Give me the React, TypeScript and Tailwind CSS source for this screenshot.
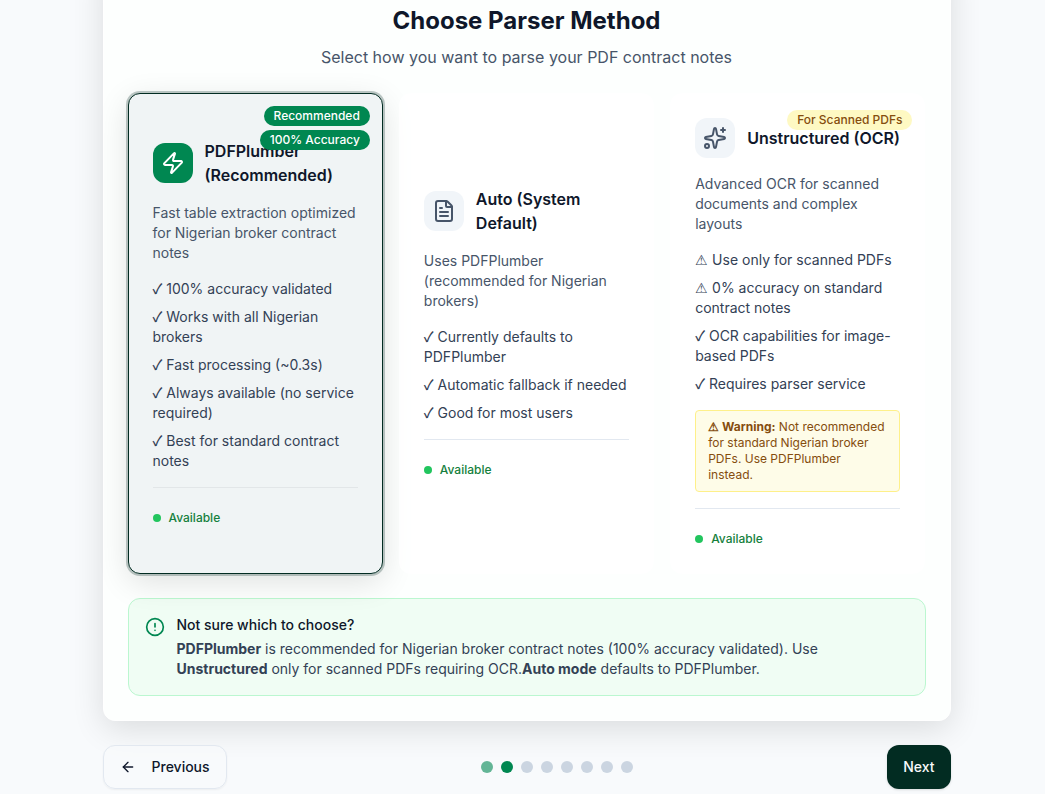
import clsx from "clsx";
import { ArrowLeft, CircleAlert, FileText, Sparkles, Zap } from "lucide-react";
import type { LucideIcon } from "lucide-react";
import React, { useState } from "react";

type ParserId = "pdfplumber" | "auto" | "unstructured";

interface Feature {
  mark: "✓" | "⚠";
  text: string;
}

interface ParserMethod {
  id: ParserId;
  name: string;
  description: string;
  icon: LucideIcon;
  features: Feature[];
  warning?: string;
}

const methods: ParserMethod[] = [
  {
    id: "pdfplumber",
    name: "PDFPlumber (Recommended)",
    description:
      "Fast table extraction optimized for Nigerian broker contract notes",
    icon: Zap,
    features: [
      { mark: "✓", text: "100% accuracy validated" },
      { mark: "✓", text: "Works with all Nigerian brokers" },
      { mark: "✓", text: "Fast processing (~0.3s)" },
      { mark: "✓", text: "Always available (no service required)" },
      { mark: "✓", text: "Best for standard contract notes" },
    ],
  },
  {
    id: "auto",
    name: "Auto (System Default)",
    description: "Uses PDFPlumber (recommended for Nigerian brokers)",
    icon: FileText,
    features: [
      { mark: "✓", text: "Currently defaults to PDFPlumber" },
      { mark: "✓", text: "Automatic fallback if needed" },
      { mark: "✓", text: "Good for most users" },
    ],
  },
  {
    id: "unstructured",
    name: "Unstructured (OCR)",
    description: "Advanced OCR for scanned documents and complex layouts",
    icon: Sparkles,
    features: [
      { mark: "⚠", text: "Use only for scanned PDFs" },
      { mark: "⚠", text: "0% accuracy on standard contract notes" },
      { mark: "✓", text: "OCR capabilities for image-based PDFs" },
      { mark: "✓", text: "Requires parser service" },
    ],
    warning:
      "Not recommended for standard Nigerian broker PDFs. Use PDFPlumber instead.",
  },
];

const STEP_COUNT = 8;
const CURRENT_STEP = 1;

export default function App() {
  const [selected, setSelected] = useState<ParserId>("pdfplumber");

  return (
    <main className="min-h-screen overflow-hidden bg-[#f8fafc] pl-2 font-['Inter',sans-serif] text-slate-900">
      <div className="mx-auto max-w-4xl px-6">
        <section className="-mt-10 rounded-xl border border-white bg-[#fdfffe] px-6 pt-11 pb-6 shadow-[0_8px_32px_rgba(0,0,0,0.12)]">
          <header className="mb-6 text-center">
            <h2 className="mb-2 text-2xl font-bold text-[#0f172a]">
              Choose Parser Method
            </h2>
            <p className="text-[#475569]">
              Select how you want to parse your PDF contract notes
            </p>
          </header>

          <div className="grid grid-cols-3 gap-4">
            {methods.map((method) => (
              <MethodCard
                key={method.id}
                method={method}
                selected={method.id === selected}
                onSelect={() => setSelected(method.id)}
              />
            ))}
          </div>

          <HelpNote />
        </section>

        <StepNavigation />
      </div>
    </main>
  );
}

interface MethodCardProps {
  method: ParserMethod;
  selected: boolean;
  onSelect: () => void;
}

function MethodCard({ method, selected, onSelect }: MethodCardProps) {
  const Icon = method.icon;

  return (
    <button
      type="button"
      aria-pressed={selected}
      onClick={onSelect}
      className={clsx(
        "relative flex flex-col justify-center rounded-xl border p-6 text-left",
        selected
          ? "border-[#022c22] bg-[#f0f4f5] shadow-[0_8px_32px_rgba(0,0,0,0.12)] ring-2 ring-[#022c22]/25"
          : "border-transparent bg-white/70",
      )}
    >
      <div className="mb-4 flex items-center gap-3">
        <span
          className={clsx(
            "flex size-10 shrink-0 items-center justify-center rounded-xl",
            selected ? "bg-[#008751] text-white" : "bg-[#f1f5f9] text-[#475569]",
          )}
        >
          <Icon className="size-6" />
        </span>
        <h3 className="font-semibold text-[#0f172a]">{method.name}</h3>
      </div>

      <p className="mb-4 text-sm text-[#475569]">{method.description}</p>

      <ul className="space-y-2 text-sm text-[#334155]">
        {method.features.map((feature) => (
          <li key={feature.text}>
            <Mark>{feature.mark}</Mark> {feature.text}
          </li>
        ))}
      </ul>

      {method.warning && (
        <p className="mt-4 rounded-sm border border-[#fef08a] bg-[#fefce8] px-3 py-2 text-xs text-[#854d0e]">
          <strong className="font-bold">
            <Mark>⚠</Mark> Warning:
          </strong>{" "}
          {method.warning}
        </p>
      )}

      <div
        className={clsx(
          "mt-4 flex w-full items-center gap-2 border-t pt-5 text-xs/5 font-medium text-[#15803d]",
          selected ? "border-[#e2e6e8]" : "border-[#e2e8f0]",
        )}
      >
        <span className="size-2 rounded-full bg-[#22c55e]" />
        Available
      </div>

      {method.id === "pdfplumber" && (
        <div className="absolute top-3 right-3 flex flex-col items-end gap-1">
          <Badge className="bg-[#008751] text-white">Recommended</Badge>
          <Badge className="bg-[#008751] text-white">100% Accuracy</Badge>
        </div>
      )}
      {method.id === "unstructured" && (
        <div className="absolute top-4 right-3 flex">
          <Badge className="bg-[#fef9c3] text-[#854d0e]">For Scanned PDFs</Badge>
        </div>
      )}
    </button>
  );
}

function Mark({ children }: { children: string }) {
  return (
    <span
      className={clsx(
        "leading-none",
        children === "✓"
          ? "font-['Noto_Sans_CJK_SC',sans-serif] font-medium"
          : "font-['Noto_Sans',sans-serif]",
      )}
    >
      {children}
    </span>
  );
}

function Badge(props: { className: string; children: React.ReactNode }) {
  return (
    <span
      className={clsx(
        "rounded-full px-2.5 py-0.5 text-xs font-medium",
        props.className,
      )}
    >
      {props.children}
    </span>
  );
}

function HelpNote() {
  return (
    <div className="mt-6 flex items-start gap-3 rounded-xl border border-[#bbf7d0] bg-[#f0fdf4] p-4">
      <CircleAlert className="mt-0.5 size-5 shrink-0 text-[#008751]" />
      <div className="text-sm">
        <p className="mb-1 font-medium text-[#0f172a]">
          Not sure which to choose?
        </p>
        <p className="text-[#334155]">
          <strong>PDFPlumber</strong> is recommended for Nigerian broker
          contract notes (100% accuracy validated). Use{" "}
          <strong>Unstructured</strong> only for scanned PDFs requiring OCR.
          <strong>Auto mode</strong> defaults to PDFPlumber.
        </p>
      </div>
    </div>
  );
}

function StepNavigation() {
  return (
    <nav className="mt-6 flex items-center justify-between text-sm font-medium">
      <button
        type="button"
        className="flex h-11 items-center gap-4 rounded-xl border border-[#e2e8f0] bg-[#f8fafc]/60 px-4 shadow-xs"
      >
        <ArrowLeft className="size-4" />
        Previous
      </button>

      <div className="flex gap-2">
        {Array.from({ length: STEP_COUNT }, (_, step) => (
          <span
            key={step}
            className={clsx(
              "size-3 rounded-full",
              step < CURRENT_STEP && "bg-[#008751]/60",
              step === CURRENT_STEP && "bg-[#008751]",
              step > CURRENT_STEP && "bg-[#cbd5e1]",
            )}
          />
        ))}
      </div>

      <button
        type="button"
        className="h-11 rounded-xl bg-[#022c22] px-4 text-[#f8fafc] shadow-sm"
      >
        Next
      </button>
    </nav>
  );
}
